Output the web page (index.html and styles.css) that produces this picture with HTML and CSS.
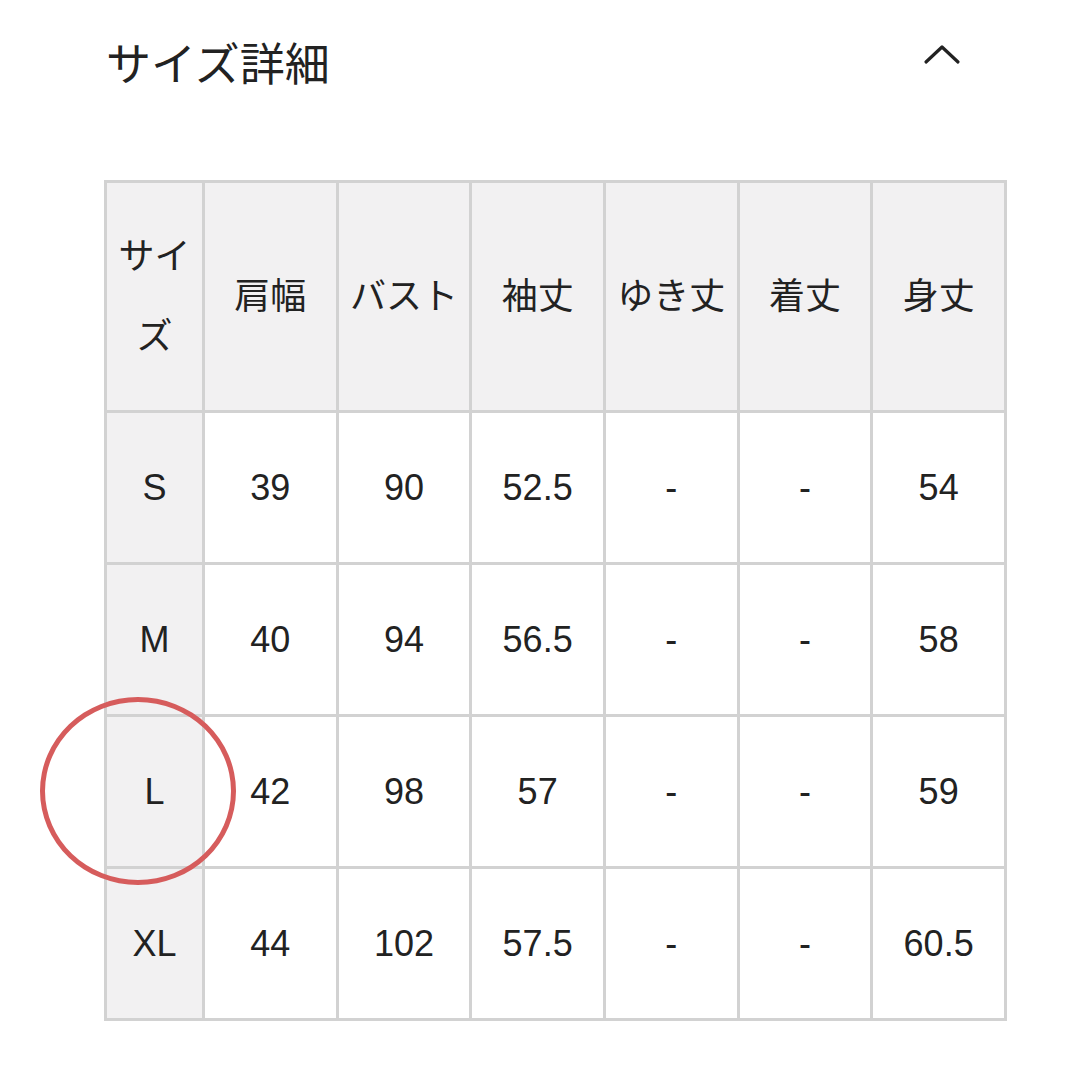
FILE: index.html
```html
<!DOCTYPE html>
<html lang="ja">
<head>
<meta charset="utf-8">
<link rel="stylesheet" href="styles.css">
</head>
<body>
<div class="page">
  <div class="header">
    <h2 class="title">サイズ詳細</h2>
    <svg class="chevron" width="40" height="24" viewBox="0 0 40 24"><path d="M4 20 L20 5 L36 20" fill="none" stroke="#222" stroke-width="3.2" stroke-linecap="round" stroke-linejoin="round"/></svg>
  </div>
  <div class="table-wrap">
    <table class="size-table">
      <colgroup>
        <col class="c-size"><col><col><col><col><col><col>
      </colgroup>
      <thead>
        <tr>
          <th class="size-head">サイズ</th><th>肩幅</th><th>バスト</th><th>袖丈</th><th>ゆき丈</th><th>着丈</th><th>身丈</th>
        </tr>
      </thead>
      <tbody>
        <tr><th>S</th><td>39</td><td>90</td><td>52.5</td><td>-</td><td>-</td><td>54</td></tr>
        <tr><th>M</th><td>40</td><td>94</td><td>56.5</td><td>-</td><td>-</td><td>58</td></tr>
        <tr><th>L</th><td>42</td><td>98</td><td>57</td><td>-</td><td>-</td><td>59</td></tr>
        <tr><th>XL</th><td>44</td><td>102</td><td>57.5</td><td>-</td><td>-</td><td>60.5</td></tr>
      </tbody>
    </table>
    <span class="circle"></span>
  </div>
</div>
</body>
</html>
```

FILE: styles.css
```css
html, body {
  margin: 0;
  padding: 0;
  background: #ffffff;
}
body {
  font-family: "Liberation Sans", "Noto Sans CJK JP", sans-serif;
  color: #222;
}
.page {
  width: 1070px;
  height: 1080px;
  overflow: hidden;
}
.header {
  display: flex;
  justify-content: space-between;
  align-items: flex-start;
  padding: 30px 106px 0 106px;
  height: 90px;
}
.title {
  margin: 0;
  font-family: "Noto Sans CJK JP", sans-serif;
  font-weight: 400;
  font-size: 45px;
  line-height: 64px;
  color: #222;
}
.chevron {
  margin-top: 12px;
  margin-right: 2px;
}
.table-wrap {
  position: relative;
  margin: 60px 0 0 104px;
  width: 903px;
}
.size-table {
  border-collapse: collapse;
  table-layout: fixed;
  width: 903px;
  border: 3px solid #d2d2d2;
}
.size-table col.c-size {
  width: 98px;
}
.size-table th,
.size-table td {
  border: 3px solid #d2d2d2;
  text-align: center;
  vertical-align: middle;
  font-weight: 400;
  font-size: 36px;
  color: #222;
  padding: 0 8px;
}
.size-table thead th {
  background: #f2f1f2;
  height: 227px;
  line-height: 80px;
  padding: 0 4px;
  white-space: normal;
}
.size-table thead th.size-head {
  padding: 0 6px;
}
.size-table tbody th {
  background: #f2f1f2;
}
.size-table tbody td {
  background: #ffffff;
}
.size-table tbody tr {
  height: 152px;
}
.circle {
  position: absolute;
  left: -64px;
  top: 517px;
  width: 186px;
  height: 178px;
  border: 5px solid #d65c5c;
  border-radius: 50%;
}
```
